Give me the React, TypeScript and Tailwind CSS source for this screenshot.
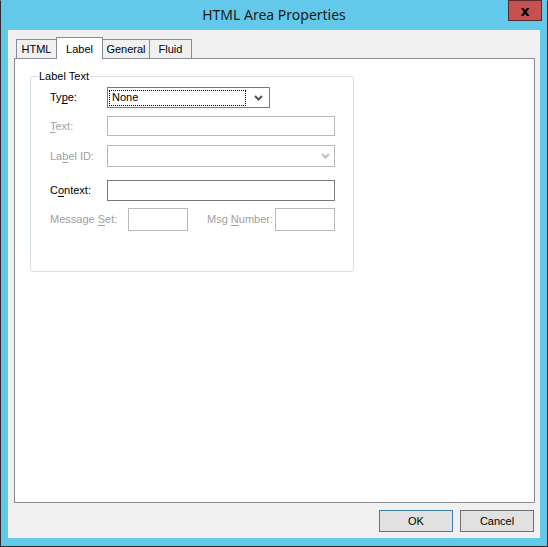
import type { ReactNode } from "react";

const tabs = [
  { name: "HTML", width: "w-[41px]" },
  { name: "Label", width: "w-[47px]", active: true },
  { name: "General", width: "w-[48px]" },
  { name: "Fluid", width: "w-[43px]" },
];

function Chevron({ color }: { color: string }) {
  return (
    <svg width="9" height="6" viewBox="0 0 9 6" className="shrink-0">
      <polyline points="1,1 4.5,4.5 8,1" fill="none" stroke={color} strokeWidth="2" />
    </svg>
  );
}

// label with one underlined access key
function Caption({ pre, hot, post, disabled, width }: { pre: string; hot: string; post: string; disabled?: boolean; width: string }) {
  return (
    <span className={`${width} shrink-0 ${disabled ? "text-[#a0a0a0]" : "text-black"}`}>
      {pre}
      <span className="underline underline-offset-2">{hot}</span>
      {post}
    </span>
  );
}

function Row({ children, className }: { children: ReactNode; className: string }) {
  return <div className={`flex items-center ${className}`}>{children}</div>;
}

export default function App() {
  return (
    <div className="flex h-[547px] w-[548px] flex-col border border-t-[#63c9ea] border-[#2b2b2b] bg-[#63c9ea] font-['Liberation_Sans',Arial,sans-serif] text-[11px]">
      {/* title bar */}
      <div className="grid h-[29px] shrink-0 grid-cols-[1fr_auto_1fr] items-start">
        <div />
        <div className="pt-[4px] font-['Noto_Sans',sans-serif] text-[14px] leading-[20px] text-[#1a1a1a]">HTML Area Properties</div>
        <div className="flex justify-end">
          <button
            type="button"
            className="mr-[5px] mt-[-1px] flex h-[21px] w-[34px] items-center justify-center border border-[#5a2a28] bg-[#c75050] font-['DejaVu_Sans',sans-serif] text-[14px] font-bold leading-none text-black"
          >
            x
          </button>
        </div>
      </div>

      {/* client area */}
      <div className="mx-[7px] flex h-[508px] flex-col bg-[#f0f0f0] pl-[6px] pr-[5px] pt-[7px]">
        <div className="flex h-[21px] items-end pl-[2px]">
          {tabs.map((t, i) =>
            t.active ? (
              <div
                key={t.name}
                className={`${t.width} relative z-10 -mb-px ml-[-1px] flex h-[22px] items-start justify-center border border-b-0 border-[#898c95] bg-white pt-[3px]`}
              >
                {t.name}
              </div>
            ) : (
              <div
                key={t.name}
                className={`${t.width} ${i > 0 ? "ml-[-1px]" : ""} flex h-[19px] items-center justify-center border border-b-0 border-[#898c95] bg-[#f0f0f0]`}
              >
                {t.name}
              </div>
            )
          )}
        </div>

        <div className="h-[445px] w-[521px] border border-[#898c95] bg-white pl-[15px] pt-[11px]">
          <fieldset className="h-[202px] w-[324px] rounded-[3px] border border-[#d5dfe5]">
            <legend className="ml-[7px] px-[1px] leading-[13px] text-black">Label Text</legend>

            <div className="pl-[19px]">
              <Row className="mt-[4px] h-[21px]">
                <Caption pre="Ty" hot="p" post="e:" width="w-[57px]" />
                <div className="flex h-[21px] w-[163px] items-center border border-[#7a7a7a] bg-white pl-[1px] pr-[6px]">
                  <div className="flex h-[16px] flex-1 items-center border border-dotted border-black pl-[2px]">None</div>
                  <div className="ml-[8px]">
                    <Chevron color="#555555" />
                  </div>
                </div>
              </Row>

              <Row className="mt-[8px] h-[20px]">
                <Caption pre="" hot="T" post="ext:" disabled width="w-[57px]" />
                <div className="h-[20px] w-[228px] border border-[#b9b9b9] bg-white" />
              </Row>

              <Row className="mt-[9px] h-[22px]">
                <Caption pre="La" hot="b" post="el ID:" disabled width="w-[57px]" />
                <div className="flex h-[22px] w-[228px] items-center justify-end border border-[#b9b9b9] bg-white pr-[4px]">
                  <Chevron color="#c0c0c0" />
                </div>
              </Row>

              <Row className="mt-[13px] h-[21px]">
                <Caption pre="C" hot="o" post="ntext:" width="w-[57px]" />
                <div className="h-[21px] w-[228px] border border-[#7a7a7a] bg-white" />
              </Row>

              <Row className="mt-[7px] h-[23px]">
                <Caption pre="Message " hot="S" post="et:" disabled width="w-[78px]" />
                <div className="h-[23px] w-[60px] border border-[#b9b9b9] bg-white" />
                <span className="ml-[19px]" />
                <Caption pre="Msg " hot="N" post="umber:" disabled width="w-[68px]" />
                <div className="h-[23px] w-[60px] border border-[#b9b9b9] bg-white" />
              </Row>
            </div>
          </fieldset>
        </div>

        <div className="mt-[7px] flex justify-end gap-[7px] pr-[1px]">
          <button type="button" className="h-[22px] w-[74px] border border-[#3c7fb1] bg-[#e1e1e1] text-black">
            OK
          </button>
          <button type="button" className="h-[22px] w-[74px] border border-[#707070] bg-[#e1e1e1] text-black">
            Cancel
          </button>
        </div>
      </div>
    </div>
  );
}
